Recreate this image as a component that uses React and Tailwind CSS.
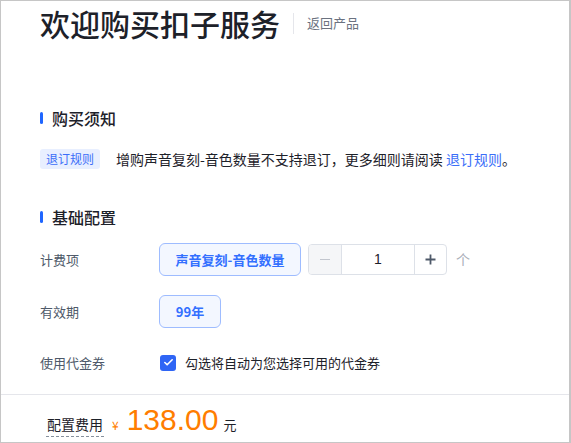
import { Check } from "lucide-react";

function SectionTitle({ children }) {
  return (
    <div className="flex items-center h-[24px]">
      <span className="w-[3px] h-[12px] rounded-full bg-[#1f66ff]" />
      <span className="ml-[9px] text-[16px] leading-[24px] font-medium text-[#1d2129]">{children}</span>
    </div>
  );
}

function Row({ label, children, className = "" }) {
  return (
    <div className={"flex items-center h-[33px] " + className}>
      <div className="w-[119px] text-[13px] text-[#4e5969]">{label}</div>
      {children}
    </div>
  );
}

export default function App() {
  return (
    <div className="w-[571px] h-[443px] bg-white border-t border-l border-b border-r-2 border-[#c6c6c6] flex flex-col overflow-hidden font-['Noto_Sans_CJK_SC',sans-serif]">
      <div className="flex-1 pl-[39px]">
        {/* header */}
        <div className="flex items-center pt-[7px] h-[37px]">
          <h1 className="text-[30px] leading-[30px] font-medium text-[#1d2129]">欢迎购买扣子服务</h1>
          <span className="ml-[13px] w-px h-[21px] bg-[#e5e6eb]" />
          <a className="ml-[13px] text-[13px] text-[#6b7280]">返回产品</a>
        </div>

        <div className="mt-[68px]">
          <SectionTitle>购买须知</SectionTitle>
        </div>

        <div className="mt-[19px] flex items-center h-[20px]">
          <span className="h-[20px] px-[6px] rounded-[3px] bg-[#e8efff] text-[12px] leading-[20px] text-[#3b6ef8]">退订规则</span>
          <p className="ml-[16px] text-[14px] text-[#1d2129]">
            增购声音复刻-音色数量不支持退订，更多细则请阅读 <span className="text-[#3b6ef8]">退订规则</span>。
          </p>
        </div>

        <div className="mt-[36px]">
          <SectionTitle>基础配置</SectionTitle>
        </div>

        <Row label="计费项" className="mt-[14px]">
          <button className="w-[142px] h-[33px] rounded-[6px] border border-[#9ebcff] bg-[#f3f7ff] text-[13px] font-semibold text-[#3370ff]">
            声音复刻-音色数量
          </button>
          <div className="ml-[7px] flex h-[31px] w-[139px] rounded-[4px] border border-[#dde1e8] overflow-hidden">
            <div className="w-[33px] flex items-center justify-center bg-[#f5f6f8] border-r border-[#dde1e8]">
              <span className="w-[10px] h-[1.5px] bg-[#c2c6ce]" />
            </div>
            <div className="flex-1 flex items-center justify-center text-[14px] text-[#1d2129] font-['Liberation_Sans',sans-serif]">1</div>
            <div className="w-[32px] flex items-center justify-center border-l border-[#dde1e8]">
              <svg width="11" height="11" viewBox="0 0 11 11">
                <path d="M5.5 0.5v10M0.5 5.5h10" stroke="#4e5969" strokeWidth="1.8" />
              </svg>
            </div>
          </div>
          <span className="ml-[9px] text-[14px] text-[#a9aeb8]">个</span>
        </Row>

        <Row label="有效期" className="mt-[19px]">
          <button className="w-[62px] h-[33px] rounded-[6px] border border-[#9ebcff] bg-[#f3f7ff] text-[13px] font-semibold text-[#3370ff]">
            99年
          </button>
        </Row>

        <Row label="使用代金券" className="mt-[18px]">
          <span className="ml-px w-[16px] h-[16px] rounded-[3px] bg-[#2f65f5] flex items-center justify-center">
            <Check size={11} strokeWidth={3.5} color="white" />
          </span>
          <span className="ml-[9px] text-[13px] text-[#1d2129]">勾选将自动为您选择可用的代金券</span>
        </Row>
      </div>

      <div className="h-[48px] border-t border-[#e5e6eb] flex items-baseline pl-[45px] pt-[10px]">
        <span className="text-[14px] leading-[20px] text-[#1d2129] border-b border-dashed border-[#86909c] px-[1px] pb-[2px]">配置费用</span>
        <span className="ml-[8px] text-[12px] text-[#ff7d00]">¥</span>
        <span className="ml-[8px] text-[30px] leading-[30px] text-[#ff7d00] font-['Liberation_Sans',sans-serif]">138.00</span>
        <span className="ml-[5px] text-[13px] text-[#1d2129]">元</span>
      </div>
    </div>
  );
}
